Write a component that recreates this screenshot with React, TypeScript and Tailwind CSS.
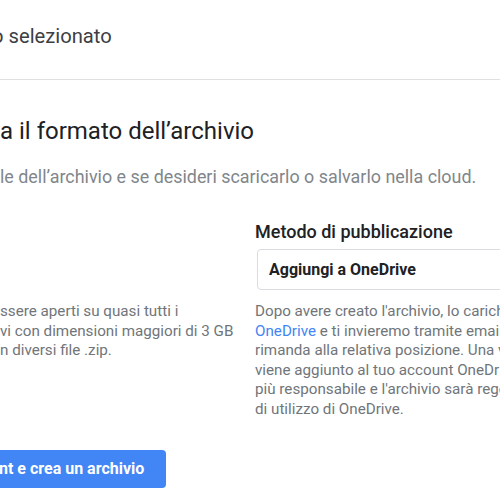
const descLines = [
  "Dopo avere creato l'archivio, lo caricheremo su",
  null,
  "rimanda alla relativa posizione. Una volta che l'archivio",
  "viene aggiunto al tuo account OneDrive, Google non ne è",
  "più responsabile e l'archivio sarà regolato dai termini",
  "di utilizzo di OneDrive.",
];

const zipLines = ["ssere aperti su quasi tutti i", "vi con dimensioni maggiori di 3 GB", "n diversi file .zip."];

const App = () => {
  return (
    <div className="w-[500px] h-[500px] overflow-hidden bg-white font-['Roboto',sans-serif]">
      <header className="h-[80px] border-b border-[#e0e0e0] pt-[24px]">
        <div className="-ml-[8px] whitespace-nowrap text-[20.2px] leading-[24px] text-[#3c4043]">o selezionato</div>
      </header>

      <section className="pt-[35px]">
        <h2 className="whitespace-nowrap text-[24px] leading-[32px] text-[#202124]">a il formato dell’archivio</h2>
        <p className="mt-[18px] whitespace-nowrap text-[17.9px] leading-[24px] text-[#80868b]">
          le dell’archivio e se desideri scaricarlo o salvarlo nella cloud.
        </p>

        <div className="mt-[31px] flex">
          <div className="w-[255px] shrink-0 pt-[82px] text-[15.2px] leading-[19.5px] text-[#70757a]">
            {zipLines.map((l) => (
              <div key={l} className="whitespace-nowrap">{l}</div>
            ))}
          </div>
          <div className="w-[320px] shrink-0">
            <div className="text-[18px] leading-[24px] font-medium text-[#202124]">Metodo di pubblicazione</div>
            <div className="mt-[5px] ml-[2px] h-[41px] flex items-center rounded-[4px] border border-[#dadce0] px-[11px] text-[16px] font-bold text-[#202124]">
              Aggiungi a OneDrive
            </div>
            <div className="mt-[12px] text-[15.2px] leading-[19.5px] text-[#70757a]">
              {descLines.map((l, i) =>
                l === null ? (
                  <div key={i} className="whitespace-nowrap">
                    <span className="text-[#4285f4]">OneDrive</span> e ti invieremo tramite email un link che
                  </div>
                ) : (
                  <div key={i} className="whitespace-nowrap">{l}</div>
                )
              )}
            </div>
          </div>
        </div>

        <button className="mt-[31px] -ml-[6px] h-[38px] rounded-[4px] bg-[#4285f4] pl-[5px] pr-[22px] text-[16px] font-bold text-white whitespace-nowrap">
          nt e crea un archivio
        </button>
      </section>
    </div>
  );
};

export default App;
